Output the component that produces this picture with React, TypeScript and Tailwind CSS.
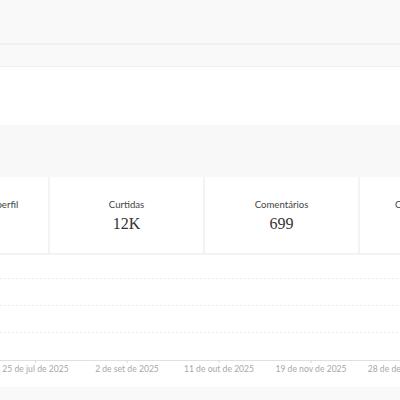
const cards = [
  { label: 'Visualizações do perfil', value: '3,4K' },
  { label: 'Curtidas', value: '12K' },
  { label: 'Comentários', value: '699' },
  { label: 'Compartilhamentos', value: '210' },
];

const ticks = [
  { x: 35.5, label: '25 de jul de 2025' },
  { x: 127, label: '2 de set de 2025' },
  { x: 219, label: '11 de out de 2025' },
  { x: 311, label: '19 de nov de 2025' },
  { x: 403, label: '28 de dez de 2025' },
];

function StatCard({ label, value }: { label: string; value: string }) {
  return (
    <div className="w-[153px] shrink-0 bg-white flex flex-col items-center pt-[22px]">
      <span className="text-[9.6px] leading-[12px] text-[#444] font-['Lato',sans-serif] whitespace-nowrap">{label}</span>
      <span className="mt-[4px] text-[16px] leading-[18px] text-[#333] font-['Liberation_Serif',serif]">{value}</span>
    </div>
  );
}

function Chart() {
  const grid = [23, 50, 77];
  return (
    <svg width="400" height="132" className="block">
      {grid.map((y) => (
        <line key={y} x1="0" x2="400" y1={y + 0.5} y2={y + 0.5} stroke="#ebebeb" strokeDasharray="2 2" />
      ))}
      <line x1="0" x2="400" y1="105.5" y2="105.5" stroke="#e0e0e0" />
      {ticks.map((t) => (
        <g key={t.label}>
          <line x1={t.x} x2={t.x} y1="105" y2="108" stroke="#d8d8d8" />
          <text
            x={t.x}
            y="117"
            textAnchor="middle"
            fontSize="8.6"
            fill="#a8a8a8"
            fontFamily="Lato, sans-serif"
          >
            {t.label}
          </text>
        </g>
      ))}
    </svg>
  );
}

export default function App() {
  return (
    <div className="w-[400px] h-[400px] overflow-hidden bg-[#f9f9f9]">
      <div className="h-[43px]" />
      <div className="h-[24px] border-t-2 border-b border-[#f0f0f0]" />
      <div className="h-[58px] bg-white" />
      <div className="h-[52px] bg-[#f8f8f8]" />

      <div className="h-[76px] bg-[#f3f3f3] flex gap-[2px] ml-[-105px]">
        {cards.map((c) => (
          <StatCard key={c.label} label={c.label} value={c.value} />
        ))}
      </div>

      <div className="h-[2px] bg-[#f3f3f3]" />
      <div className="h-[132px] bg-white">
        <Chart />
      </div>
    </div>
  );
}
